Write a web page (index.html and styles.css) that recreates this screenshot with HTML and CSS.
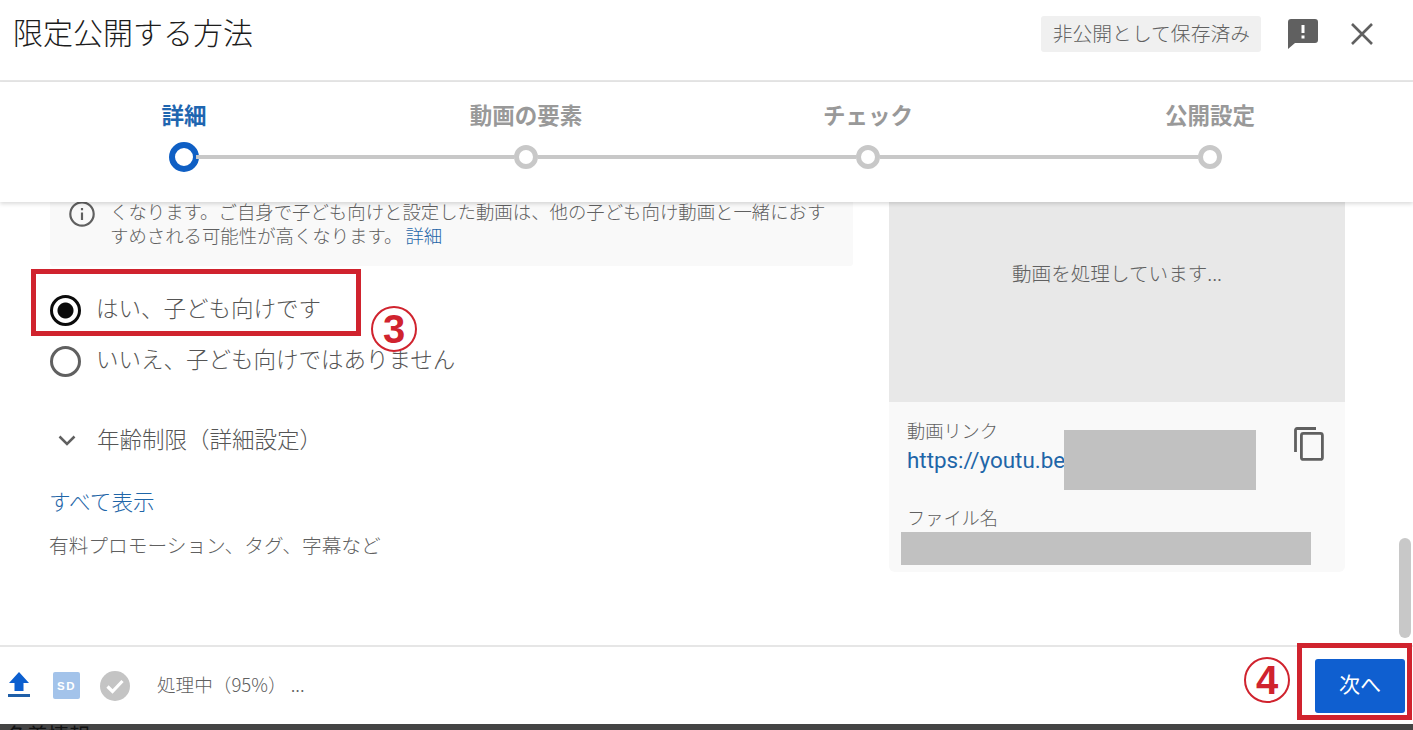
FILE: index.html
```html
<!DOCTYPE html>
<html lang="ja">
<head>
    <meta charset="UTF-8">
    <meta name="viewport" content="width=device-width, initial-scale=1.0">
    <title>限定公開する方法</title>
    <link rel="stylesheet" href="styles.css">
</head>
<body>
    <div class="dialog">
        <!-- ヘッダー -->
        <header class="dialog-header">
            <h1 class="dialog-title">限定公開する方法</h1>
            <span class="save-badge">非公開として保存済み</span>
            <svg class="feedback-icon" viewBox="0 0 30 30"><path d="M3 0h24a3 3 0 0 1 3 3v18a3 3 0 0 1-3 3H7l-7 6V3a3 3 0 0 1 3-3z" fill="#606060"/><path d="M13.5 6h3v8h-3zM13.5 16.5h3v3h-3z" fill="#fff"/></svg>
            <svg class="close-icon" viewBox="0 0 22 22"><path d="M1 1l20 20M21 1L1 21" stroke="#606060" stroke-width="2.6" fill="none"/></svg>
        </header>

        <!-- ステップ -->
        <nav class="stepper">
            <div class="step-labels">
                <span class="step-label active">詳細</span>
                <span class="step-label">動画の要素</span>
                <span class="step-label">チェック</span>
                <span class="step-label">公開設定</span>
            </div>
            <div class="step-track">
                <span class="step-dot active"></span>
                <span class="step-line"></span>
                <span class="step-dot"></span>
                <span class="step-line"></span>
                <span class="step-dot"></span>
                <span class="step-line"></span>
                <span class="step-dot"></span>
            </div>
        </nav>

        <!-- 本文 -->
        <main class="dialog-body">
            <section class="left-col">
                <div class="info-box">
                    <svg class="info-icon" viewBox="0 0 24 24"><circle cx="12" cy="12" r="10.8" stroke="#606060" stroke-width="2" fill="none"/><path d="M11 10.500h2v7h-2zM11 6.500h2v2h-2z" fill="#606060"/></svg>
                    <p class="info-text">
                        <span class="info-line">くなります。ご自身で子ども向けと設定した動画は、他の子ども向け動画と一緒におす</span>
                        <span class="info-line">すめされる可能性が高くなります。<a class="link info-link">詳細</a></span>
                    </p>
                </div>
                <label class="radio-row first">
                    <span class="radio checked"></span>
                    <span class="radio-text">はい、子ども向けです</span>
                </label>
                <label class="radio-row">
                    <span class="radio"></span>
                    <span class="radio-text">いいえ、子ども向けではありません</span>
                </label>
                <div class="age-row">
                    <svg class="chevron" viewBox="0 0 18 12"><path d="M1.500 1.500L9 9l7.500-7.500" stroke="#606060" stroke-width="2.500" fill="none"/></svg>
                    <span class="age-text">年齢制限（詳細設定）</span>
                </div>
                <a class="link show-all">すべて表示</a>
                <p class="show-all-note">有料プロモーション、タグ、字幕など</p>
            </section>

            <aside class="right-col">
                <div class="preview">動画を処理しています...</div>
                <div class="video-info">
                    <div class="link-row">
                        <div class="link-block">
                            <div class="info-label">動画リンク</div>
                            <div class="url-row">
                                <a class="url">https://youtu.be</a>
                                <span class="mask mask-url"></span>
                            </div>
                        </div>
                        <svg class="copy-icon" viewBox="0 0 30 34"><path d="M22 1.500H3a1.500 1.500 0 0 0-1.500 1.500v22" stroke="#606060" stroke-width="2.800" fill="none"/><rect x="7.400" y="6.400" width="21" height="26" rx="2" stroke="#606060" stroke-width="2.800" fill="none"/></svg>
                    </div>
                    <div class="info-label file-label">ファイル名</div>
                    <span class="mask mask-file"></span>
                </div>
            </aside>
            <span class="scroll-thumb"></span>
        </main>

        <!-- フッター -->
        <footer class="dialog-footer">
            <svg class="upload-icon" viewBox="0 0 22 27"><path d="M11 0l10 11h-5.500v8h-9v-8H1z" fill="#0c5fcf"/><rect x="0" y="22" width="22" height="3" fill="#1f5fa8"/></svg>
            <svg class="sd-icon" viewBox="0 0 27 27"><rect width="27" height="27" rx="2" fill="#a3c3ea"/><text x="13.500" y="18" class="sd-text">SD</text></svg>
            <svg class="check-icon" viewBox="0 0 30 30"><circle cx="15" cy="15" r="15" fill="#c4c4c4"/><path d="M7.500 15.500l5 5L22.500 10" stroke="#fff" stroke-width="3.200" fill="none"/></svg>
            <span class="progress-text">処理中（95%） ...</span>
            <button class="next-btn"><span class="next-label">次へ</span></button>
        </footer>

        <div class="page-strip"><span class="strip-text">名義情報</span></div>
    </div>

    <!-- 注釈 -->
    <div class="mark mark-box-radio"></div>
    <div class="mark mark-box-next"></div>
    <div class="mark-num mark-num-3">3</div>
    <div class="mark-num mark-num-4">4</div>
</body>
</html>
```

FILE: styles.css
```css
* {
    margin: 0;
    padding: 0;
    box-sizing: border-box;
}

body {
    font-family: "Noto Sans CJK JP", "Noto Sans", sans-serif;
    font-weight: 300;
    color: #606060;
    background: #fff;
    height: 730px;
    overflow: hidden;
    position: relative;
}

.dialog {
    display: flex;
    flex-direction: column;
    height: 730px;
}

/* ヘッダー */
.dialog-header {
    height: 82px;
    flex: none;
    display: flex;
    align-items: flex-start;
    padding: 0 40px 0 13px;
    border-bottom: 2px solid #e6e6e6;
}

.dialog-title {
    font-size: 30px;
    font-weight: 300;
    line-height: 44px;
    margin-top: 9px;
    color: #1c1c1c;
    flex: 1;
}

.save-badge {
    margin-top: 16px;
    height: 36px;
    line-height: 34px;
    padding: 0 11px 0 12px;
    font-size: 19.8px;
    background: #f0f0f0;
    border-radius: 3px;
    white-space: nowrap;
}

.feedback-icon {
    width: 30px;
    height: 30px;
    margin: 19px 0 0 27px;
}

.close-icon {
    width: 22px;
    height: 22px;
    margin: 23px 0 0 33px;
}

/* ステップ */
.stepper {
    height: 120px;
    flex: none;
    padding: 16px 0 0;
    position: relative;
    z-index: 2;
    background: #fff;
    box-shadow: 0 2px 4px rgba(0, 0, 0, 0.14);
}

.step-labels {
    display: grid;
    grid-template-columns: repeat(4, 342px);
    padding-left: 13px;
    height: 32px;
}

.step-label {
    font-size: 22.5px;
    font-weight: 700;
    line-height: 32px;
    text-align: center;
    color: #999;
}

.step-label.active {
    color: #1f66b0;
}

.step-track {
    display: flex;
    align-items: center;
    margin: 12px 0 0 169px;
    width: 1053px;
}

.step-dot {
    width: 24px;
    height: 24px;
    border-radius: 50%;
    border: 5px solid #c8c8c8;
    flex: none;
}

.step-dot.active {
    width: 30px;
    height: 30px;
    border: 6px solid #0f5fc4;
    margin-right: -3px;
}

.step-line {
    height: 4px;
    flex: 1;
    background: #c8c8c8;
}

/* 本文 */
.dialog-body {
    flex: 1;
    min-height: 0;
    display: flex;
    align-items: flex-start;
    padding: 0 0 0 50px;
    overflow: hidden;
    position: relative;
}

.left-col {
    width: 803px;
    flex: none;
}

.info-box {
    height: 64px;
    display: flex;
    gap: 15px;
    padding: 0 20px 0 19px;
    background: #f9f9f9;
    border-radius: 0 0 3px 3px;
}

.info-icon {
    width: 26px;
    height: 26px;
    flex: none;
    margin-top: -1px;
}

.info-line {
    display: block;
    font-size: 18.4px;
    line-height: 19px;
    white-space: nowrap;
}

.info-line + .info-line {
    margin-top: 5px;
}

.info-link {
    margin-left: 3px;
}

.link {
    color: #1f66a8;
}

.radio-row {
    display: flex;
    align-items: center;
    gap: 15px;
    height: 34px;
}

.radio-row.first {
    margin-top: 27px;
}

.radio-row + .radio-row {
    margin-top: 17px;
}

.radio {
    width: 31px;
    height: 31px;
    border-radius: 50%;
    border: 3px solid #606060;
    flex: none;
    background: #fff;
}

.radio.checked {
    border-color: #0b0b0b;
    background: radial-gradient(circle, #0b0b0b 0 7.500px, #fff 8.500px);
}

.radio-text {
    font-size: 22.5px;
    color: #555;
    line-height: 34px;
    margin-top: -7px;
}

.age-row {
    display: flex;
    align-items: center;
    gap: 22px;
    margin: 46px 0 0 8px;
    height: 34px;
}

.chevron {
    width: 18px;
    height: 12px;
    flex: none;
}

.age-text {
    font-size: 22.5px;
    color: #555;
    margin: -7px 0 0 -1px;
}

.show-all {
    display: block;
    font-size: 21.6px;
    line-height: 30px;
    margin: 28px 0 0 -1px;
}

.show-all-note {
    font-size: 19.7px;
    line-height: 30px;
    margin: 14px 0 0 -1px;
}

.right-col {
    width: 456px;
    flex: none;
    margin-left: 36px;
}

.preview {
    height: 200px;
    background: #e8e8e8;
    font-size: 19.6px;
    display: flex;
    align-items: center;
    justify-content: center;
    padding-bottom: 60px;
}

.video-info {
    height: 170px;
    background: #f9f9f9;
    border-radius: 0 0 6px 6px;
    padding: 15px 20px 0 18px;
}

.link-row {
    display: flex;
    justify-content: space-between;
}

.info-label {
    font-size: 18.2px;
    line-height: 26px;
}

.url-row {
    display: flex;
    align-items: center;
    height: 34px;
}

.url {
    font-family: Roboto, "Noto Sans", sans-serif;
    font-weight: 400;
    font-size: 22.4px;
    color: #1f66a8;
}

.mask {
    display: block;
    background: #c1c1c1;
}

.mask-url {
    width: 192px;
    height: 60px;
    margin: -14px 0 -14px -1px;
}

.copy-icon {
    width: 30px;
    height: 34px;
    margin: 10px 1px 0 0;
}

.file-label {
    margin-top: 27px;
}

.mask-file {
    width: 410px;
    height: 33px;
    margin: 2px 0 0 -6px;
}

.scroll-thumb {
    position: absolute;
    left: 1399px;
    top: 336px;
    width: 12px;
    height: 100px;
    border-radius: 6px;
    background: #c8c8c8;
}

/* フッター */
.dialog-footer {
    height: 79px;
    flex: none;
    display: flex;
    align-items: center;
    padding: 0 8px 0 8px;
    border-top: 2px solid #e6e6e6;
}

.upload-icon {
    width: 22px;
    height: 27px;
}

.sd-icon {
    width: 27px;
    height: 27px;
    margin-left: 23px;
}

.sd-text {
    font-family: "Liberation Sans", sans-serif;
    font-size: 11.500px;
    font-weight: 700;
    fill: #fff;
    text-anchor: middle;
    letter-spacing: 1.500px;
}

.check-icon {
    width: 30px;
    height: 30px;
    margin-left: 20px;
}

.progress-text {
    font-size: 18.6px;
    margin: -4px 0 0 27px;
    flex: 1;
    white-space: pre;
}

.next-btn {
    width: 90px;
    height: 54px;
    background: #0f5fd0;
    color: #fff;
    border: none;
    border-radius: 3px;
    font-family: inherit;
    font-size: 21px;
    font-weight: 400;
}

.next-label {
    display: block;
    margin-top: -6px;
}

.page-strip {
    height: 6px;
    flex: none;
    background: #444;
    overflow: hidden;
    padding-left: 6px;
}

.strip-text {
    display: block;
    font-size: 21px;
    line-height: 21px;
    font-weight: 400;
    color: #111;
}

/* 注釈 */
.mark {
    position: absolute;
    border: 5px solid #d0232e;
}

.mark-box-radio {
    left: 31px;
    top: 269px;
    width: 330px;
    height: 67px;
}

.mark-box-next {
    left: 1297px;
    top: 643px;
    width: 115px;
    height: 77px;
}

.mark-num {
    position: absolute;
    width: 46px;
    height: 46px;
    border: 2px solid #d0232e;
    border-radius: 50%;
    color: #d0232e;
    font-family: "Liberation Sans", sans-serif;
    font-weight: 700;
    font-size: 40px;
    line-height: 43px;
    text-align: center;
}

.mark-num-3 {
    left: 371px;
    top: 306px;
}

.mark-num-4 {
    left: 1244px;
    top: 657px;
}
```
